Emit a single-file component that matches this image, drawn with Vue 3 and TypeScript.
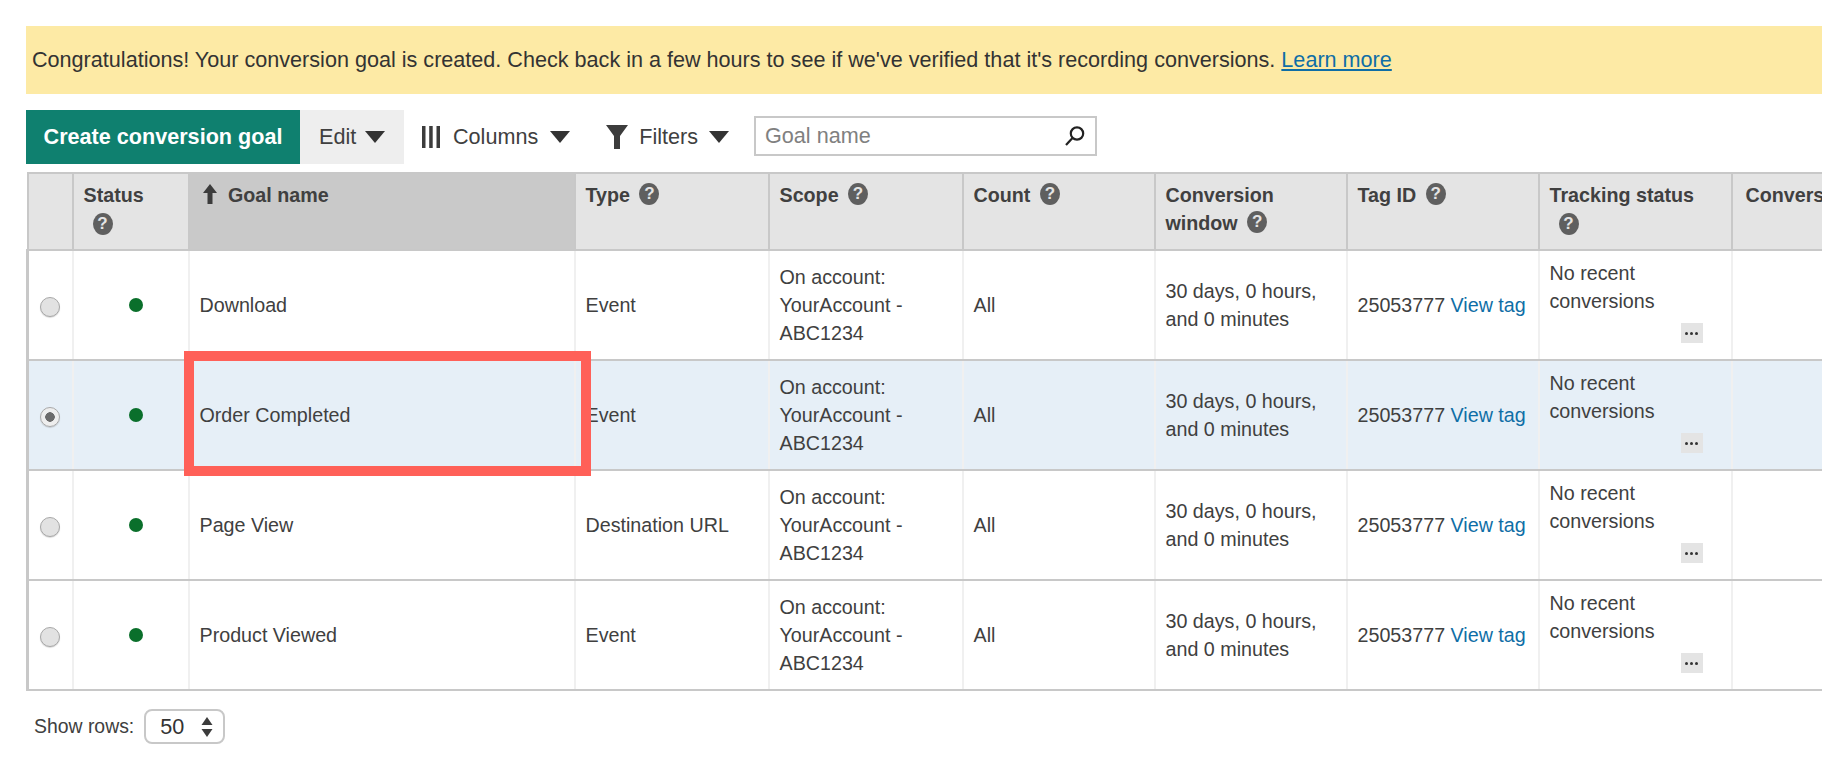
<template>
  <div class="page">
    <div class="notice">
      Congratulations! Your conversion goal is created. Check back in a few hours to see if we've verified that it's recording conversions.
      <a class="link notice-link">Learn more</a>
    </div>

    <div class="toolbar">
      <button class="create-btn">Create conversion goal</button>
      <button class="edit-btn">Edit <span class="caret"></span></button>
      <div class="tool columns-tool">
        <svg width="20" height="22" viewBox="0 0 20 22"><path d="M1 0h3.500v22H1zM8.200 0h3.500v22H8.200zM15.500 0H19v22h-3.500z" fill="#3c3c3c" /></svg>
        <span>Columns</span>
        <span class="caret"></span>
      </div>
      <div class="tool filters-tool">
        <svg width="22" height="24" viewBox="0 0 22 24"><path d="M0 0h22l-8 11v13H8V11z" fill="#3c3c3c" /></svg>
        <span>Filters</span>
        <span class="caret"></span>
      </div>
      <div class="search">
        <span class="search-text">Goal name</span>
        <svg width="22" height="22" viewBox="0 0 22 22" fill="none" stroke="#222" stroke-width="2.200"><circle cx="13" cy="8.500" r="6.200" /><path d="M8.500 13 2 20" /></svg>
      </div>
    </div>

    <div class="table-wrap">
      <table class="goals">
        <colgroup>
          <col v-for="w in colWidths" :key="w.id" :style="{ width: w.px + 'px' }" />
        </colgroup>
        <thead>
          <tr>
            <th></th>
            <th>Status<br /><span class="help help-under">?</span></th>
            <th class="sorted">
              <svg class="sort-arrow" width="16" height="20" viewBox="0 0 16 20"><path d="M8 0l7 9h-4.500v11h-5V9H1z" fill="#3c3c3c" /></svg>
              Goal name
            </th>
            <th>Type <span class="help">?</span></th>
            <th>Scope <span class="help">?</span></th>
            <th>Count <span class="help">?</span></th>
            <th>Conversion<br />window <span class="help">?</span></th>
            <th>Tag ID <span class="help">?</span></th>
            <th>Tracking status<br /><span class="help help-under">?</span></th>
            <th class="last-head">Conversions</th>
          </tr>
        </thead>
        <tbody>
          <tr v-for="row in rows" :key="row.name" :class="{ selected: row.selected }">
            <td class="radio-cell"><span class="radio" :class="{ on: row.selected }"></span></td>
            <td class="dot-cell"><span class="dot"></span></td>
            <td>{{ row.name }}</td>
            <td>{{ row.type }}</td>
            <td>On account:<br />YourAccount -<br />ABC1234</td>
            <td>All</td>
            <td>30 days, 0 hours,<br />and 0 minutes</td>
            <td class="tag-cell">25053777 <a class="link">View tag</a></td>
            <td class="tracking-cell">
              No recent<br />conversions
              <span class="more"><i></i><i></i><i></i></span>
            </td>
            <td></td>
          </tr>
        </tbody>
      </table>
      <div class="highlight"></div>
    </div>

    <div class="pager">
      <span>Show rows:</span>
      <div class="rows-select">
        <span>50</span>
        <svg width="12" height="20" viewBox="0 0 12 20"><path d="M6 0l5.500 8H.5zM6 20L.5 12h11z" fill="#3c3c3c" /></svg>
      </div>
    </div>
  </div>
</template>

<script setup lang="ts">
interface GoalRow {
  name: string
  type: string
  selected?: boolean
}

const colWidths = [
  { id: 'pick', px: 45 },
  { id: 'status', px: 116 },
  { id: 'name', px: 386 },
  { id: 'type', px: 194 },
  { id: 'scope', px: 194 },
  { id: 'count', px: 192 },
  { id: 'window', px: 192 },
  { id: 'tag', px: 192 },
  { id: 'tracking', px: 193 },
  { id: 'conv', px: 190 },
]

const rows: GoalRow[] = [
  { name: 'Download', type: 'Event' },
  { name: 'Order Completed', type: 'Event', selected: true },
  { name: 'Page View', type: 'Destination URL' },
  { name: 'Product Viewed', type: 'Event' },
]
</script>

<style>
html,
body {
  margin: 0;
  background: #fff;
  overflow: hidden;
}
</style>

<style scoped>
.page {
  width: 1822px;
  height: 758px;
  padding: 26px 0 0 26px;
  box-sizing: border-box;
  overflow: hidden;
  font-family: 'Liberation Sans', Arial, sans-serif;
  font-size: 19.700px;
  color: #404040;
}

.notice {
  height: 68px;
  line-height: 68px;
  padding-left: 6px;
  background: #fdeaa5;
  font-size: 21.600px;
  color: #333;
  white-space: nowrap;
}

.link {
  color: #0f6ea6;
}

.notice-link {
  text-decoration: underline;
}

.toolbar {
  display: flex;
  align-items: center;
  height: 54px;
  margin-top: 16px;
}

.create-btn {
  height: 54px;
  width: 274px;
  border: none;
  background: #0f806f;
  color: #fff;
  font: bold 21.600px 'Liberation Sans', Arial, sans-serif;
}

.edit-btn {
  display: flex;
  align-items: center;
  gap: 9px;
  height: 54px;
  width: 104px;
  padding: 0 0 0 19px;
  border: none;
  background: #eee;
  color: #404040;
  font: 21.600px 'Liberation Sans', Arial, sans-serif;
}

.caret {
  display: inline-block;
  width: 0;
  height: 0;
  border-left: 10.500px solid transparent;
  border-right: 10.500px solid transparent;
  border-top: 12px solid #333;
}

.tool {
  display: flex;
  align-items: center;
  font-size: 21.600px;
}

.columns-tool {
  gap: 12px;
  margin-left: 17px;
}

.filters-tool {
  gap: 11px;
  margin-left: 36px;
}

.search {
  display: flex;
  align-items: center;
  justify-content: space-between;
  box-sizing: border-box;
  width: 343px;
  height: 40px;
  margin-left: 25px;
  margin-top: -2px;
  padding: 0 9px;
  border: 2px solid #c8c8c8;
}

.search-text {
  font-size: 21.600px;
  color: #808080;
}

.table-wrap {
  position: relative;
  margin-top: 8px;
  width: 1796px;
  overflow: hidden;
}

.goals {
  table-layout: fixed;
  border-collapse: collapse;
  width: 1894px;
}

.goals th,
.goals td {
  box-sizing: border-box;
  padding: 0 10px;
  line-height: 28px;
}

.goals th {
  height: 77px;
  vertical-align: top;
  padding-top: 7px;
  text-align: left;
  background: #e4e4e4;
  border: 2px solid #c8c8c8;
  font-weight: bold;
  font-size: 19.700px;
}

.goals th.sorted {
  background: #c9c9c9;
  border-top-color: #c8c8c8;
}

.goals th.last-head {
  padding-left: 13px;
}

.sort-arrow {
  margin: 0 5px 0 2px;
  vertical-align: -2px;
}

.help {
  display: inline-block;
  width: 20px;
  height: 22px;
  margin-left: 4px;
  border-radius: 50%;
  background: #5f5f5f;
  color: #e4e4e4;
  font-size: 17px;
  line-height: 22px;
  text-align: center;
  vertical-align: 3px;
}

.help-under {
  margin-left: 9px;
  vertical-align: 1px;
}

.goals td {
  height: 110px;
  padding-bottom: 1px;
  background: #fff;
  border-top: 2px solid #c8c8c8;
  border-bottom: 2px solid #c8c8c8;
  border-left: 2px solid #f0f0f0;
  border-right: 2px solid #f0f0f0;
  font-size: 19.700px;
}

.goals td:first-child {
  border-left: 3px solid #c8c8c8;
}

.goals tr.selected td {
  background: #e6eff7;
}

.radio-cell {
  text-align: center;
}

.radio {
  display: inline-block;
  box-sizing: border-box;
  width: 20px;
  height: 20px;
  margin-top: 2px;
  border: 1.500px solid #a8a8a8;
  border-radius: 50%;
  background: #e2e2e2;
  box-shadow: 0 1px 1px rgba(0, 0, 0, 0.15);
  vertical-align: middle;
}

.radio.on {
  background: radial-gradient(circle, #6b6b6b 0 4.500px, #eee 5px);
}

.dot-cell {
  text-align: center;
}

.dot {
  display: inline-block;
  width: 14px;
  height: 14px;
  margin-left: 10px;
  margin-top: -2px;
  border-radius: 50%;
  background: #0a6f2b;
  vertical-align: middle;
}

.tag-cell {
  white-space: nowrap;
}

.tracking-cell {
  position: relative;
  vertical-align: top;
  padding-top: 8px !important;
}

.more {
  position: absolute;
  right: 28px;
  bottom: 16px;
  display: flex;
  align-items: center;
  justify-content: center;
  gap: 2px;
  width: 22px;
  height: 20px;
  background: #e4e4e4;
}

.more i {
  width: 3px;
  height: 3px;
  border-radius: 50%;
  background: #333;
}

.highlight {
  position: absolute;
  left: 158px;
  top: 179px;
  width: 407px;
  height: 125px;
  box-sizing: border-box;
  border: 10px solid #ff6058;
  pointer-events: none;
}

.pager {
  display: flex;
  align-items: center;
  gap: 10px;
  margin-top: 18px;
  padding-left: 8px;
  font-size: 19.400px;
}

.rows-select {
  display: flex;
  align-items: center;
  justify-content: space-between;
  box-sizing: border-box;
  width: 81px;
  height: 35px;
  padding: 0 10px 0 14px;
  border: 2px solid #c8c8c8;
  border-radius: 8px;
  font-size: 21.600px;
  color: #333;
}
</style>
